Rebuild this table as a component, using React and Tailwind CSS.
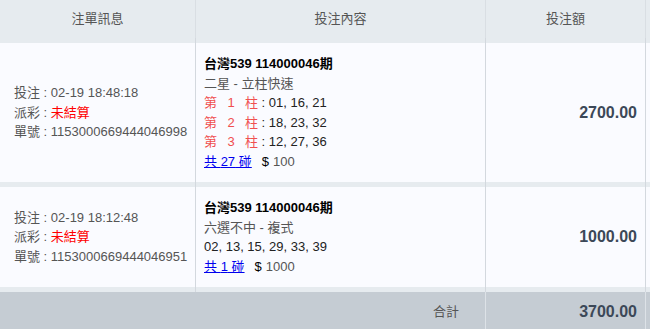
const FONT = { fontFamily: '"Liberation Sans", Arial, "Noto Sans CJK TC", sans-serif' };

const COLS = "grid grid-cols-[196px_290px_160px_40px]";

const ORDERS = [
  {
    time: "02-19 18:48:18",
    no: "1153000669444046998",
    game: "台灣539 114000046期",
    type: "二星 - 立柱快速",
    picks: [
      { n: "1", nums: "01, 16, 21" },
      { n: "2", nums: "18, 23, 32" },
      { n: "3", nums: "12, 27, 36" },
    ],
    count: "27",
    unit: "100",
    amount: "2700.00",
  },
  {
    time: "02-19 18:12:48",
    no: "1153000669444046951",
    game: "台灣539 114000046期",
    type: "六選不中 - 複式",
    nums: "02, 13, 15, 29, 33, 39",
    count: "1",
    unit: "1000",
    amount: "1000.00",
  },
];

function Separator() {
  return (
    <div className={`${COLS} h-[5px] bg-[#e6ebef]`}>
      <div className="border-r border-[#d3d8de]" />
      <div className="border-r border-[#d3d8de]" />
      <div className="border-r border-[#d3d8de]" />
      <div />
    </div>
  );
}

function OrderRow({ o }) {
  return (
    <div className={`${COLS} bg-[#fafbff] text-[13px] leading-[19.5px]`}>
      <div className="flex flex-col justify-center border-r border-[#d3d8de] pl-[14px] text-[#555]">
        <div>投注 : {o.time}</div>
        <div>
          派彩 : <span className="text-[#ff0000]">未結算</span>
        </div>
        <div>單號 : {o.no}</div>
      </div>
      <div className="border-r border-[#d3d8de] px-[8px] py-[11px]">
        <div className="font-bold text-black">{o.game}</div>
        <div className="text-[#555]">{o.type}</div>
        {o.picks &&
          o.picks.map((p) => (
            <div key={p.n} className="flex text-[#222]">
              <span className="inline-flex w-[54px] justify-between text-[#f04f4f]">
                <span>第</span>
                <span>{p.n}</span>
                <span>柱</span>
              </span>
              <span className="whitespace-pre"> : {p.nums}</span>
            </div>
          ))}
        {o.nums && <div className="text-[#222]">{o.nums}</div>}
        <div>
          <a href="#" className="text-[#0000ee] underline">
            共 {o.count} 碰
          </a>
          <span className="ml-[10px] text-black">$</span>
          <span className="ml-[4px] text-[#555]">{o.unit}</span>
        </div>
      </div>
      <div className="flex items-center justify-end border-r border-[#d3d8de] pr-[8px] text-[16px] font-bold text-[#3c4858]">
        {o.amount}
      </div>
      <div />
    </div>
  );
}

export default function App() {
  return (
    <div className="h-[329px] w-[650px] overflow-hidden bg-[#fafbff]" style={FONT}>
      <div className="w-[686px]">
        {/* header */}
        <div className={`${COLS} h-[38px] bg-[#e6ebef] text-[13px] leading-[19.5px] text-[#555]`}>
          <div className="flex items-center justify-center border-r border-[#d9dee3]">注單訊息</div>
          <div className="flex items-center justify-center border-r border-[#d9dee3]">投注內容</div>
          <div className="flex items-center justify-center border-r border-[#d9dee3]">投注額</div>
          <div />
        </div>
        <Separator />

        {ORDERS.map((o) => (
          <div key={o.no}>
            <OrderRow o={o} />
            <Separator />
          </div>
        ))}

        {/* total */}
        <div className="grid h-[40px] grid-cols-[486px_160px_40px] bg-[#c5ccd3] text-[13px] leading-[19.5px]">
          <div className="flex items-center justify-end border-r border-[#dde2e7] pr-[26px] text-[#555]">合計</div>
          <div className="flex items-center justify-end border-r border-[#dde2e7] pr-[8px] text-[16px] font-bold text-[#3c4858]">
            3700.00
          </div>
          <div />
        </div>
      </div>
    </div>
  );
}
